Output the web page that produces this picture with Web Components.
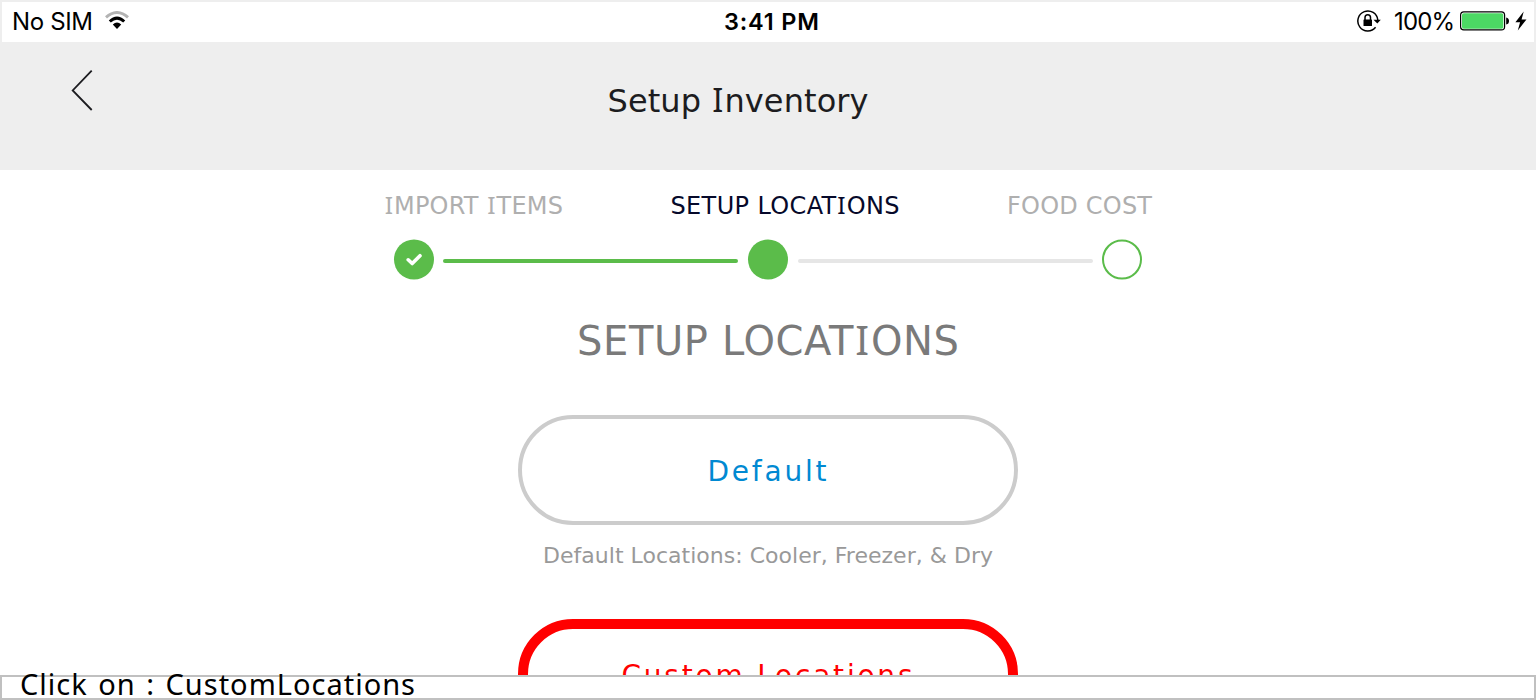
<!DOCTYPE html>
<html lang="en"><head><meta charset="utf-8"><title>Setup Inventory</title>
<style>html,body{margin:0;height:700px;overflow:hidden;background:#fff}</style></head><body>
<inventory-app></inventory-app>
<script>
const define=(name,html,after)=>customElements.define(name,class extends HTMLElement{
  connectedCallback(){
    if(this.shadowRoot)return;
    const t=document.createElement('template');t.innerHTML=html;
    this.attachShadow({mode:'open'}).append(t.content.cloneNode(true));
    if(after)after(this);
  }
});
// Tracks its text so that the line spans the given measure.
define('track-text',`<style>:host{display:block;white-space:pre;flex:none}span{display:inline-block}
::slotted(i){font-family:"Noto Sans",sans-serif;font-style:normal;font-size:1.02em;line-height:1;padding:0 .03em}</style><span><slot></slot></span>`,el=>{
  const s=el.shadowRoot.querySelector('span'),w=+el.getAttribute('measure');
  const n=el.textContent.length;
  el.style.width=w+'px';
  s.style.letterSpacing=((w-s.getBoundingClientRect().width)/(n-1))+'px';
});
define('status-bar',`<style>
:host{display:grid;grid-template-columns:1fr auto 1fr;align-items:center;height:40px;margin:0 2px;background:#fff;color:#000;font:24px/38px Inter,sans-serif}
.l,.r{display:flex;align-items:center}.l{padding-left:10px;gap:12px}.r{justify-content:flex-end;padding-right:7px}
.t{font-weight:600;left:3.5px;font-size:23.5px;margin-top:-1px}svg{display:block;flex:none;margin-top:-2px}.lock{margin-right:12px}.bat{margin:-2px 6px 0 5px}
track-text{position:relative}.l track-text,.r track-text{margin-top:-1px}
</style>
<div class="l"><track-text measure="81">No SIM</track-text>
<svg width="24" height="20" viewBox="0 0 24 20" fill="none"><path d="M1 6.3Q12-3.2 23 6.3" stroke="#b3b3b3" stroke-width="3"/><path d="M4.8 10.5Q12 3.8 19.2 10.5" stroke="#000" stroke-width="3"/><path d="M7.8 13.6Q12 9.5 16.2 13.6L12 18Z" fill="#000"/></svg></div>
<track-text class="t" measure="95">3:41 PM</track-text>
<div class="r"><svg class="lock" width="25" height="22" viewBox="0 0 25 22"><path d="M18.6 17.3A10 10 0 1 1 20.8 10" fill="none" stroke="#000" stroke-width="1.5"/><path d="M16.5 9.8h7.3L20.3 13.5Z"/><rect x="6.5" y="9.5" width="8.5" height="6.5" rx=".6"/><path d="M8 10V7.5a2.75 2.75 0 0 1 5.5 0V10" fill="none" stroke="#000" stroke-width="1.5"/></svg>
<track-text measure="61">100%</track-text>
<svg class="bat" width="49" height="20" viewBox="0 0 49 20"><rect x=".6" y=".9" width="44" height="18" rx="3.2" fill="#fff" stroke="#000" stroke-width="1.2"/><rect x="2" y="2.2" width="41.3" height="15.5" rx="1.8" fill="#4cd964"/><path d="M46.2 6.5Q49 7 49 10T46.2 13.5Z"/></svg>
<svg width="12" height="20" viewBox="0 0 12 20"><path d="M8.7.4.4 11.2h4.7L2.8 19.6 11.5 8.4H6.6Z"/></svg></div>`);
define('nav-header',`<style>:host{display:grid;grid-template-columns:607.5px 1fr;height:128px;box-sizing:border-box;color:#1c1c20;font:32px/38px "DejaVu Sans",sans-serif}
svg{display:block;margin:27px 0 0 70px}track-text{margin-top:40px}</style>
<svg width="24" height="43" viewBox="0 0 24 43" fill="none" stroke="#1c1c20" stroke-width="1.8"><path d="M21.7 1.7 2.7 21.5 21.7 41"/></svg><track-text measure="261">Setup <i>I</i>nventory</track-text>`);
define('step-tracker',`<style>:host{display:block;width:768px;margin:0 auto;font:24px/30px "DejaVu Sans",sans-serif;color:#afafaf}
.labels{display:flex;justify-content:space-between;padding-top:21px}.now{color:#06092a}
.track{display:flex;align-items:center;height:40px;padding:0 10px;margin-top:18.4px}
.dot{width:40px;height:40px;flex:none;display:block}
.line{height:4px;border-radius:2px;flex:1;margin:3px 10px 0 9px;background:#5bbc4a}.off{background:#e6e6e6;margin:3px 9px 0 10px}</style>
<div class="labels"><track-text measure="179"><i>I</i>MPORT <i>I</i>TEMS</track-text><track-text class="now" measure="229">SETUP LOCAT<i>I</i>ONS</track-text><track-text measure="145">FOOD COST</track-text></div>
<div class="track"><svg class="dot" viewBox="0 -.5 40 40" overflow="visible"><circle cx="20" cy="20" r="20" fill="#5bbc4a"/><path d="M14.2 20.3 18.2 24 26 16.2" fill="none" stroke="#fff" stroke-width="3.6" stroke-linecap="round" stroke-linejoin="round"/></svg><div class="line"></div><svg class="dot" viewBox="0 -.5 40 40" overflow="visible"><circle cx="20" cy="20" r="20" fill="#5bbc4a"/></svg><div class="line off"></div><svg class="dot" viewBox="0 -.5 40 40" overflow="visible"><circle cx="20" cy="20" r="19" fill="#fff" stroke="#5bbc4a" stroke-width="2"/></svg></div>`);
define('pill-button',`<style>:host{display:grid;place-items:center;box-sizing:border-box;width:500px;height:110px;padding-top:5px;border:4px solid #ccc;border-radius:55px;background:#fff;color:#0089d2;font:28px/34px "DejaVu Sans",sans-serif}
:host([highlight]){border:10px solid #f00;color:#f00}</style><slot></slot>`);
define('location-setup',`<style>:host{display:flex;flex-direction:column;align-items:center;font-family:"DejaVu Sans",sans-serif}
.h{font-size:40px;line-height:48px;color:#7a7a7a;margin:37.6px 0 50px}.p{font-size:22px;line-height:28px;color:#999;margin:17px 0 49px}
pill-button track-text{margin-left:-2px}</style>
<track-text class="h" measure="382">SETUP LOCAT<i>I</i>ONS</track-text>
<pill-button><track-text measure="119">Default</track-text></pill-button>
<track-text class="p" measure="450">Default Locations: Cooler, Freezer, &amp; Dry</track-text>
<pill-button highlight><track-text measure="291">Custom Locations</track-text></pill-button>`);
define('caption-bar',`<style>:host{display:block;box-sizing:border-box;height:25px;border:2px solid silver;background:#fff;color:#000;font:29px/40px "Noto Sans",sans-serif;padding-left:18px}
track-text{margin-top:-13px;word-spacing:2px}</style><track-text measure="395">Click on : CustomLocations</track-text>`);
define('inventory-app',`<style>:host{display:grid;grid-template-rows:675px 25px;height:700px}
.screen{overflow:hidden}.top{background:#eee;padding-top:2px}caption-bar{position:relative}</style>
<div class="screen"><div class="top"><status-bar></status-bar><nav-header></nav-header></div><step-tracker></step-tracker><location-setup></location-setup></div>
<caption-bar></caption-bar>`);
</script></body></html>
